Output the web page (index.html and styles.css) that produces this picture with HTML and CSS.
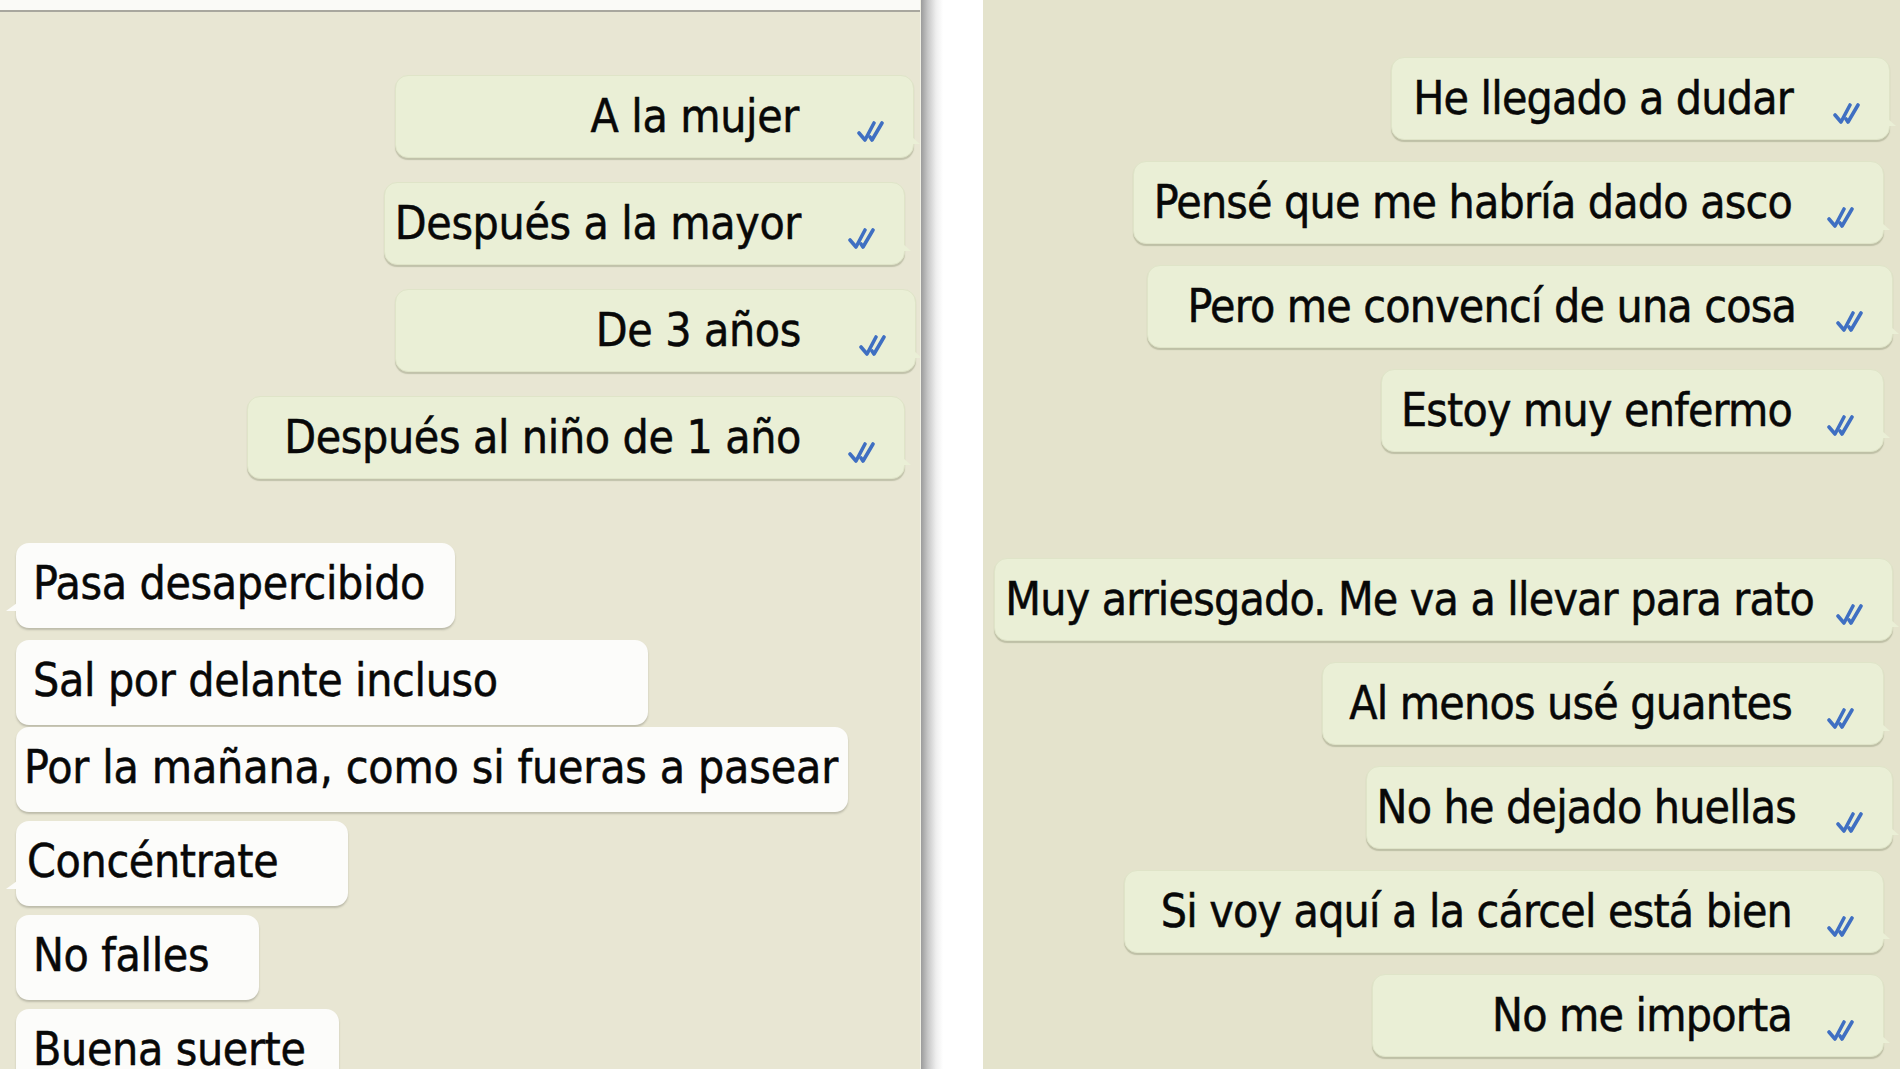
FILE: index.html
```html
<!DOCTYPE html>
<html lang="es">
<head>
<meta charset="utf-8">
<title>Chat</title>
<link rel="stylesheet" href="styles.css">
</head>
<body>
<div class="screen">
  <section class="panel panel--left">
    <div class="topbar"></div>
    <div class="chat chat--left">
      <div class="row row--out"><div class="bubble bubble--out b-l1"><span class="txt">A la mujer</span><svg class="check" viewBox="0 0 36 22"><path d="M2 13 L8 20 L17 3"/><path d="M13 17 L15 20 L25 3"/></svg></div></div>
      <div class="row row--out row--inset"><div class="bubble bubble--out b-l2"><span class="txt">Después a la mayor</span><svg class="check" viewBox="0 0 36 22"><path d="M2 13 L8 20 L17 3"/><path d="M13 17 L15 20 L25 3"/></svg></div></div>
      <div class="row row--out row--edge"><div class="bubble bubble--out b-l3"><span class="txt">De 3 años</span><svg class="check" viewBox="0 0 36 22"><path d="M2 13 L8 20 L17 3"/><path d="M13 17 L15 20 L25 3"/></svg></div></div>
      <div class="row row--out row--inset"><div class="bubble bubble--out b-l4"><span class="txt">Después al niño de 1 año</span><svg class="check" viewBox="0 0 36 22"><path d="M2 13 L8 20 L17 3"/><path d="M13 17 L15 20 L25 3"/></svg></div></div>

      <div class="row row--in row--break"><div class="bubble bubble--in b-l5"><span class="txt">Pasa desapercibido</span></div></div>
      <div class="row row--in row--loose"><div class="bubble bubble--in bubble--notail b-l6"><span class="txt">Sal por delante incluso</span></div></div>
      <div class="row row--in row--tight"><div class="bubble bubble--in bubble--notail bubble--narrowpad b-l7"><span class="txt">Por la mañana, como si fueras a pasear</span></div></div>
      <div class="row row--in"><div class="bubble bubble--in bubble--midpad b-l8"><span class="txt">Concéntrate</span></div></div>
      <div class="row row--in"><div class="bubble bubble--in bubble--notail b-l9"><span class="txt">No falles</span></div></div>
      <div class="row row--in"><div class="bubble bubble--in bubble--notail b-l10"><span class="txt">Buena suerte</span></div></div>
    </div>
  </section>

  <div class="divider"></div>

  <section class="panel panel--right">
    <div class="chat chat--right">
      <div class="row row--out row--r10"><div class="bubble bubble--out b-r1"><span class="txt">He llegado a dudar</span><svg class="check" viewBox="0 0 36 22"><path d="M2 13 L8 20 L17 3"/><path d="M13 17 L15 20 L25 3"/></svg></div></div>
      <div class="row row--out row--inset"><div class="bubble bubble--out b-r2"><span class="txt">Pensé que me habría dado asco</span><svg class="check" viewBox="0 0 36 22"><path d="M2 13 L8 20 L17 3"/><path d="M13 17 L15 20 L25 3"/></svg></div></div>
      <div class="row row--out row--edge"><div class="bubble bubble--out b-r3"><span class="txt">Pero me convencí de una cosa</span><svg class="check" viewBox="0 0 36 22"><path d="M2 13 L8 20 L17 3"/><path d="M13 17 L15 20 L25 3"/></svg></div></div>
      <div class="row row--out row--inset"><div class="bubble bubble--out b-r4"><span class="txt">Estoy muy enfermo</span><svg class="check" viewBox="0 0 36 22"><path d="M2 13 L8 20 L17 3"/><path d="M13 17 L15 20 L25 3"/></svg></div></div>

      <div class="row row--out row--edge row--break"><div class="bubble bubble--out bubble--full b-r5"><span class="txt">Muy arriesgado. Me va a llevar para rato</span><svg class="check" viewBox="0 0 36 22"><path d="M2 13 L8 20 L17 3"/><path d="M13 17 L15 20 L25 3"/></svg></div></div>
      <div class="row row--out row--inset"><div class="bubble bubble--out b-r6"><span class="txt">Al menos usé guantes</span><svg class="check" viewBox="0 0 36 22"><path d="M2 13 L8 20 L17 3"/><path d="M13 17 L15 20 L25 3"/></svg></div></div>
      <div class="row row--out row--edge"><div class="bubble bubble--out b-r7"><span class="txt">No he dejado huellas</span><svg class="check" viewBox="0 0 36 22"><path d="M2 13 L8 20 L17 3"/><path d="M13 17 L15 20 L25 3"/></svg></div></div>
      <div class="row row--out row--inset"><div class="bubble bubble--out b-r8"><span class="txt">Si voy aquí a la cárcel está bien</span><svg class="check" viewBox="0 0 36 22"><path d="M2 13 L8 20 L17 3"/><path d="M13 17 L15 20 L25 3"/></svg></div></div>
      <div class="row row--out row--inset"><div class="bubble bubble--out b-r9"><span class="txt">No me importa</span><svg class="check" viewBox="0 0 36 22"><path d="M2 13 L8 20 L17 3"/><path d="M13 17 L15 20 L25 3"/></svg></div></div>
    </div>
  </section>
</div>
</body>
</html>
```

FILE: styles.css
```css
* { box-sizing: border-box; }

html, body {
  margin: 0;
  padding: 0;
  background: #ffffff;
}

body {
  width: 1900px;
  height: 1069px;
  overflow: hidden;
  font-family: "DejaVu Sans Condensed", "DejaVu Sans", sans-serif;
  color: #080808;
}

.screen {
  display: flex;
  width: 1900px;
  height: 1069px;
}

.panel {
  height: 100%;
  overflow: hidden;
  display: flex;
  flex-direction: column;
}

.panel--left {
  width: 921px;
  background: #e8e6d3;
  border-right: 1px solid #f1f0e4;
  letter-spacing: -0.35px;
}

.panel--right {
  flex: 1;
  background: #e4e3cc;
  letter-spacing: -0.8px;
}

.topbar {
  height: 12px;
  flex: none;
  background: #fafaf7;
  border-bottom: 2px solid #a8a79e;
}

.divider {
  width: 62px;
  flex: none;
  background: linear-gradient(to right, #9b9b9b 0px, #c8c8c8 7px, #eeeeee 15px, #ffffff 22px, #ffffff 100%);
}

.chat {
  display: flex;
  flex-direction: column;
}

.chat--left { padding-top: 63px; }
.chat--right { padding-top: 57px; }

.row {
  display: flex;
  flex: none;
}

.row--out { justify-content: flex-end; }
.row--in { justify-content: flex-start; padding-left: 16px; margin-top: 9px; }

.chat--left .row--out { margin-top: 24px; }
.chat--left .row--out:first-child { margin-top: 0; }
.chat--right .row--out { margin-top: 21px; }
.chat--right .row--out:first-child { margin-top: 0; }

.chat--left .row--out { padding-right: 6px; }
.chat--left .row--out.row--inset { padding-right: 15px; }
.chat--left .row--out.row--edge { padding-right: 4px; }

.chat--right .row--out { padding-right: 16px; }
.chat--right .row--out.row--edge { padding-right: 7px; }
.chat--right .row--out.row--r10 { padding-right: 10px; }

.chat--left .row--in.row--break { margin-top: 64px; }
.chat--right .row--out.row--break { margin-top: 106px; }
.row--in.row--loose { margin-top: 12px; }
.row--in.row--tight { margin-top: 2px; }

.bubble {
  position: relative;
  display: flex;
  align-items: flex-start;
  height: 83px;
  padding-top: 13px;
  border-radius: 13px;
  font-size: 46px;
  line-height: 55px;
  white-space: nowrap;
  -webkit-text-stroke: 0.5px #080808;
}

.bubble--out {
  justify-content: flex-end;
  background: #eaefd6;
  border: 1px solid #dfe4c8;
  box-shadow: 0 2px 1px rgba(120, 125, 95, 0.35);
  padding-right: 20px;
}

.bubble--out::after {
  content: "";
  position: absolute;
  right: -7px;
  bottom: 13px;
  width: 0;
  height: 0;
  border-top: 7px solid transparent;
  border-left: 8px solid #eaefd6;
}

.bubble--in {
  height: 85px;
  padding-top: 13px;
  padding-left: 17px;
  background: #fcfcfa;
  box-shadow: 0 2px 2px rgba(110, 110, 95, 0.35);
}

.bubble--in::after {
  content: "";
  position: absolute;
  left: -10px;
  bottom: 17px;
  width: 0;
  height: 0;
  border-top: 8px solid transparent;
  border-right: 11px solid #fcfcfa;
}

.bubble--notail::after { display: none; }
.bubble--narrowpad { padding-left: 8px; letter-spacing: -0.15px; }
.bubble--midpad { padding-left: 11px; }

.txt {
  display: block;
}

.chat--left .bubble--out .txt { margin-right: 58px; }
.chat--left .row--inset .bubble--out .txt { margin-right: 47px; }
.chat--right .bubble--out .txt { margin-right: 40px; }
.chat--right .row--inset .bubble--out .txt { margin-right: 35px; }
.chat--right .bubble--full .txt { margin-right: 22px; }

.check {
  flex: none;
  align-self: flex-end;
  width: 36px;
  height: 22px;
  margin-bottom: 15px;
  fill: none;
  stroke: #3f6fc2;
  stroke-width: 3.6;
  stroke-linecap: round;
  stroke-linejoin: round;
  -webkit-text-stroke: 0;
}

/* bubble widths */
.b-l1 { width: 519px; }
.b-l2 { width: 521px; }
.b-l3 { width: 521px; }
.b-l4 { width: 658px; }
.b-l5 { width: 439px; }
.b-l6 { width: 632px; }
.b-l7 { width: 832px; }
.b-l8 { width: 332px; }
.b-l9 { width: 243px; }
.b-l10 { width: 323px; }

.b-r1 { width: 499px; }
.b-r2 { width: 751px; }
.b-r3 { width: 746px; }
.b-r4 { width: 503px; }
.b-r5 { width: 899px; }
.b-r6 { width: 562px; }
.b-r7 { width: 527px; }
.b-r8 { width: 760px; }
.b-r9 { width: 512px; }
```
